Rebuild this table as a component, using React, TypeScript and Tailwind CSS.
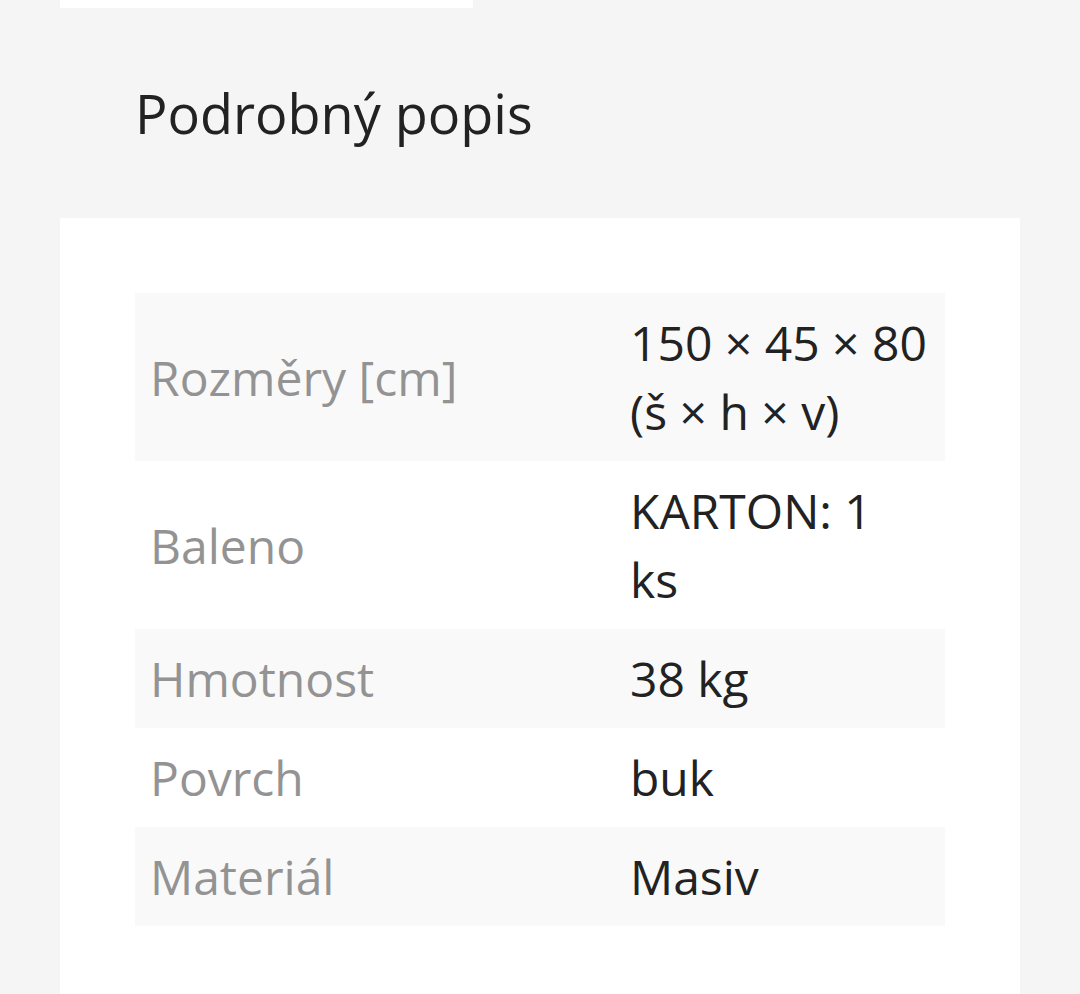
import React from "react";

const rows: { label: string; value: string }[] = [
  { label: "Rozměry [cm]", value: "150 × 45 × 80 (š × h × v)" },
  { label: "Baleno", value: "KARTON: 1 ks" },
  { label: "Hmotnost", value: "38 kg" },
  { label: "Povrch", value: "buk" },
  { label: "Materiál", value: "Masiv" },
];

export default function App() {
  return (
    <div
      className="h-[994px] w-[1080px] overflow-hidden bg-[#f5f5f5] px-[60px]"
      style={{ fontFamily: '"Open Sans", "Noto Sans", sans-serif' }}
    >
      <div className="h-[8px] w-[413px] bg-white" />
      <h2 className="mt-[63px] mb-[63px] pl-[75px] text-[54px] leading-[84px] font-normal text-[#222222]">
        Podrobný popis
      </h2>
      <div className="bg-white px-[75px] pt-[75px] pb-[80px]">
        <table className="w-[810px] table-fixed border-collapse">
          <colgroup>
            <col className="w-[480px]" />
            <col className="w-[330px]" />
          </colgroup>
          <tbody>
            {rows.map((r, i) => (
              <tr key={r.label} className={i % 2 === 0 ? "bg-[#f9f9f9]" : "bg-white"}>
                <td className="px-[15px] py-[15px] align-middle text-[48px] leading-[69px] text-[#939393]">
                  {r.label}
                </td>
                <td className="pl-[15px] pr-[17px] py-[15px] align-middle text-[48px] leading-[69px] text-[#222222]">
                  {r.value}
                </td>
              </tr>
            ))}
          </tbody>
        </table>
      </div>
    </div>
  );
}
